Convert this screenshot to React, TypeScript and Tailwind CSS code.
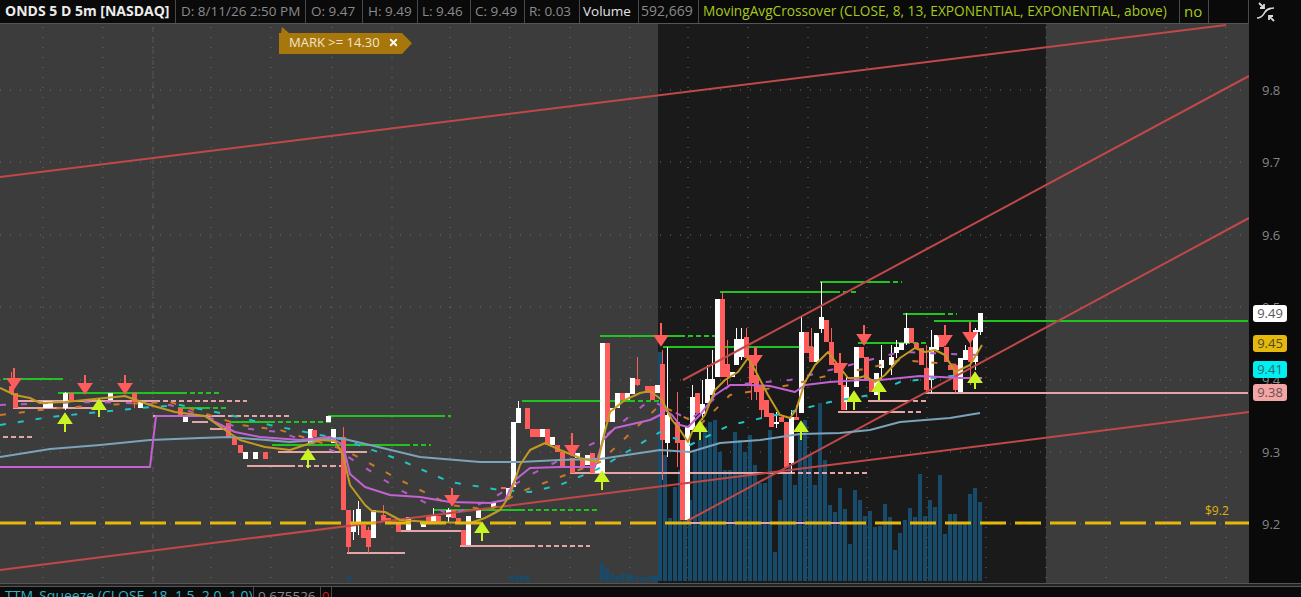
import { X } from "lucide-react";

const FONT = "font-['Open_Sans','Noto_Sans',sans-serif]";

const GRID_X = [43, 103, 153, 211, 271, 332, 392, 450, 510, 570, 630, 688, 748, 808, 867, 927, 986, 1046, 1106, 1166, 1226];
const GRID_Y = [90, 162, 235, 307, 380, 452, 524];

// tops of the volume bars in the session, one every 5px from x=658
const VOLUME = [
  352, 455, 518, 487, 470, 470, 500, 450, 440, 427, 422, 420, 452, 470, 470, 432, 440, 452, 435, 465, 483, 483, 430,
  552, 500, 473, 467, 485, 433, 420, 455, 485, 403, 460, 505, 512, 488, 509, 544, 490, 500, 516, 511, 527, 526, 504,
  517, 550, 533, 520, 508, 517, 474, 516, 500, 507, 475, 534, 514, 514, 523, 523, 494, 488, 502,
];
const PRE_VOLUME = [
  [347, 577], [510, 576], [515, 575], [520, 576], [525, 576], [600, 563], [605, 568], [610, 574], [615, 576], [620, 574],
  [625, 573], [630, 575], [635, 577], [640, 577], [645, 577], [650, 576], [654, 576],
];

type Candle = [number, number, number, "r" | "w", number?, number?];

const CANDLES: Candle[] = [
  [11, 386, 393, "r", 372, 395], [15, 393, 408, "r"], [45, 401, 408, "w"], [50, 401, 408, "w"], [65, 393, 408, "w", 392, 410],
  [71, 393, 402, "r"], [110, 393, 400, "w"], [134, 393, 402, "r", 392, 408], [140, 401, 408, "w"], [180, 408, 415, "r"],
  [185, 417, 422, "w"], [228, 423, 437, "r"], [234, 437, 445, "r"], [240, 445, 453, "r"], [245, 452, 459, "w"],
  [255, 452, 459, "w"], [265, 452, 459, "r"], [310, 429, 443, "w"], [314, 430, 437, "r"], [328, 416, 422, "w"],
  [333, 429, 443, "w"], [343, 437, 510, "r", 427, 510], [348, 510, 547, "r", 510, 553], [353, 523, 532, "w", 510, 540],
  [358, 509, 523, "w", 501, 535], [363, 525, 538, "r"], [368, 530, 547, "r", 527, 553], [373, 510, 538, "w"],
  [383, 515, 522, "r", 505, 522], [388, 518, 523, "r"], [398, 522, 532, "r"], [408, 517, 530, "w"], [423, 523, 527, "w"],
  [428, 516, 522, "r"], [433, 516, 522, "w", 508, 524], [438, 516, 522, "r"], [448, 510, 517, "w", 508, 522], [453, 510, 518, "r"],
  [458, 518, 523, "r"], [463, 530, 545, "r"], [468, 516, 545, "w"], [478, 510, 518, "w"], [493, 503, 508, "w"],
  [503, 487, 489, "r"], [508, 488, 496, "w"], [513, 422, 487, "w"], [518, 408, 423, "w", 401, 423], [527, 408, 429, "r"],
  [532, 429, 437, "r"], [537, 429, 437, "r"], [542, 429, 437, "w"], [547, 429, 445, "r"], [552, 437, 445, "w"],
  [557, 445, 452, "r"], [562, 452, 468, "r"], [572, 458, 473, "r"], [577, 453, 458, "w"], [582, 458, 467, "r"],
  [587, 455, 465, "w"], [592, 453, 473, "r"], [597, 458, 473, "w"], [602, 343, 473, "w"], [607, 343, 422, "r"],
  [612, 408, 422, "w"], [617, 393, 408, "w"], [622, 393, 400, "r"], [627, 393, 400, "w"], [632, 378, 394, "w"],
  [637, 379, 385, "r", 357, 386], [647, 386, 393, "r"], [652, 386, 400, "r"], [657, 385, 393, "w"],
  [662, 364, 440, "r", 350, 480], [667, 415, 443, "w", 347, 457], [677, 422, 443, "r", 392, 467], [682, 440, 520, "r"],
  [687, 427, 520, "w"], [692, 397, 430, "w", 385, 430], [697, 393, 413, "r"], [702, 404, 414, "w", 380, 420],
  [707, 379, 403, "w", 365, 403], [712, 379, 395, "w", 350, 395], [717, 299, 377, "w"], [722, 299, 377, "r", 292, 377],
  [727, 364, 377, "r", 340, 385], [732, 372, 377, "w"], [736, 339, 365, "w", 328, 365], [741, 339, 357, "w", 328, 360],
  [746, 337, 358, "r", 328, 358], [751, 358, 383, "r", 358, 400], [756, 375, 392, "r", 347, 400], [761, 385, 410, "r", 385, 418],
  [766, 400, 417, "r"], [771, 413, 427, "r"], [776, 422, 424, "w", 412, 428], [781, 417, 422, "r"], [786, 422, 467, "r"],
  [791, 417, 463, "w", 410, 473], [796, 417, 420, "r", 405, 420], [801, 332, 413, "w", 316, 413], [806, 332, 353, "r"],
  [811, 347, 362, "r", 328, 362], [816, 333, 362, "w"], [821, 317, 329, "w", 282, 333], [826, 320, 342, "r"],
  [831, 342, 365, "r", 328, 365], [836, 363, 373, "r"], [840, 368, 385, "r"], [843, 385, 410, "r"], [846, 387, 402, "w", 375, 410],
  [856, 347, 387, "w"], [861, 347, 358, "r"], [866, 357, 380, "r"], [871, 380, 392, "r"], [876, 373, 395, "w"],
  [881, 360, 368, "w", 345, 380], [891, 357, 365, "w", 345, 375], [896, 347, 353, "w", 340, 358], [901, 343, 350, "w"],
  [906, 328, 343, "w", 313, 345], [911, 328, 343, "r"], [916, 343, 348, "r"], [921, 348, 365, "r"], [926, 368, 390, "r", 345, 393],
  [931, 347, 380, "w", 330, 393], [936, 335, 350, "w"], [941, 335, 347, "r"], [946, 347, 362, "r"], [950, 365, 370, "r"],
  [955, 365, 390, "r", 365, 393], [960, 358, 392, "w"], [965, 350, 360, "w", 345, 360], [970, 347, 362, "r", 322, 385],
  [975, 330, 362, "w", 328, 370], [980, 313, 332, "w", 313, 335],
];

const DOWN_ARROWS = [
  [14, 368, 388], [85, 375, 393], [125, 375, 393], [452, 488, 505], [572, 433, 455], [661, 323, 345], [755, 347, 365],
  [840, 353, 373], [864, 325, 344], [945, 325, 345], [970, 322, 342],
];
const UP_ARROWS = [
  [65, 414, 432], [99, 400, 417], [308, 450, 468], [482, 523, 541], [602, 472, 490], [700, 422, 440], [801, 422, 440],
  [854, 392, 410], [879, 382, 400], [975, 373, 389],
];

// x start, x where it turns dashed, x end, y
const HIGHS = [
  [3, 63, 63, 379], [58, 182, 222, 393], [178, 205, 227, 408], [230, 270, 331, 422], [272, 330, 330, 445], [328, 440, 451, 416],
  [330, 405, 431, 445], [433, 520, 600, 510], [522, 630, 660, 401], [600, 680, 718, 336], [663, 800, 817, 347],
  [720, 835, 858, 292], [820, 885, 902, 282], [858, 905, 928, 343], [903, 940, 957, 314], [934, 1248, 1248, 321],
];
const LOWS = [
  [13, 93, 93, 408], [18, 155, 247, 401], [153, 220, 290, 416], [3, 3, 33, 437], [192, 208, 208, 422], [210, 230, 230, 429],
  [247, 290, 331, 466], [278, 367, 367, 452], [331, 331, 347, 466], [347, 405, 405, 553], [398, 463, 463, 531], [460, 530, 590, 546],
  [570, 790, 868, 473], [685, 840, 840, 523], [838, 900, 923, 412], [868, 905, 927, 401], [925, 1248, 1248, 393],
];

const TRENDS = [
  [0, 177, 1226, 25],
  [683, 380, 1249, 76],
  [687, 521, 1249, 218],
  [0, 570, 1249, 412],
];

const GOLD = "0,388 15,395 30,398 40,403 65,402 85,400 125,396 150,405 175,412 205,416 225,430 240,440 265,447 290,450 305,445 320,440 335,441 343,455 350,485 365,505 372,511 385,512 400,520 430,522 470,523 485,518 500,510 510,495 520,465 530,450 545,443 560,450 580,458 598,462 604,435 610,412 625,400 640,393 650,391 662,400 672,420 680,430 688,442 692,432 705,415 715,390 725,380 738,372 748,358 755,370 768,395 780,415 790,418 796,410 805,382 815,365 828,352 838,365 848,378 858,378 865,376 875,382 885,375 900,358 915,348 925,352 935,350 945,355 955,372 970,365 982,345";
const PURPLE = "0,467 150,467 156,416 205,416 215,422 235,432 260,437 300,440 330,437 343,445 350,474 365,487 390,495 420,497 450,502 490,503 505,500 515,480 530,468 560,467 595,467 603,440 615,428 650,420 660,415 665,410 672,415 680,425 688,427 700,415 715,395 730,385 750,385 770,386 795,392 805,385 830,382 860,380 880,380 920,376 960,378 982,378";
const SMA = "0,457 50,449 100,445 150,440 200,438 230,437 290,442 340,438 370,445 420,457 480,462 520,462 560,460 600,459 660,450 690,452 720,443 760,440 800,434 840,433 870,430 900,422 950,418 980,413";
const CYAN_DASH = "0,425 50,417 100,412 140,408 180,405 230,415 270,425 345,440 400,460 450,482 500,490 530,492 560,485 600,468 660,432 690,445 730,425 790,412 830,402 870,395 900,382 960,375";
const ORANGE_DASH = "0,415 40,410 100,405 170,402 240,425 280,430 345,450 400,480 450,505 490,510 520,492 600,462 660,405 700,425 730,395 790,385 830,375 870,368 900,360 960,365";
const PURPLE_DASH = "0,405 50,403 100,402 170,405 240,428 280,432 345,455 400,490 450,515 490,500 530,475 600,440 650,400 690,420 730,385 790,380 850,365 900,352 980,355";

function Level({ l, color }: { l: number[]; color: string }) {
  const [a, b, c, y] = l;
  return (
    <g stroke={color} strokeWidth="2">
      <line x1={a} y1={y} x2={b} y2={y} />
      {c > b && <line x1={b} y1={y} x2={c} y2={y} strokeDasharray="5 3" />}
    </g>
  );
}

function PriceChart() {
  return (
    <svg className="block h-full w-[1249px] shrink-0" viewBox="0 24 1249 559">
      <rect x="0" y="24" width="1249" height="559" fill="#3c3c3c" />
      <rect x="658" y="24" width="388" height="559" fill="#1a1a1a" />
      <g stroke="#6e6e6e" strokeWidth="1" strokeDasharray="1 9">
        {GRID_X.map((x) => (
          <line key={x} x1={x} y1="27" x2={x} y2="583" />
        ))}
        {GRID_Y.map((y) => (
          <line key={y} x1="0" y1={y} x2="1249" y2={y} />
        ))}
      </g>
      <line x1="153" y1="27" x2="153" y2="583" stroke="#565656" strokeDasharray="5 6" />

      <g fill="#184a69">
        {PRE_VOLUME.map(([x, y]) => (
          <rect key={x} x={x} y={y} width="4" height={581 - y} />
        ))}
        {VOLUME.map((y, i) => (
          <rect key={i} x={658 + i * 5} y={y} width="4" height={581 - y} />
        ))}
      </g>

      {LOWS.map((l, i) => (
        <Level key={i} l={l} color="#e3a5a5" />
      ))}
      {HIGHS.map((l, i) => (
        <Level key={i} l={l} color="#1fc41f" />
      ))}

      {CANDLES.map(([x, top, bottom, kind, hi, lo], i) => {
        const fill = kind === "w" ? "#ffffff" : "#ff5c5c";
        return (
          <g key={i} fill={fill}>
            <rect x={x} y={hi ?? top} width="1" height={(lo ?? bottom) - (hi ?? top)} />
            <rect x={x - 2} y={top} width="5" height={bottom - top} />
          </g>
        );
      })}

      {TRENDS.map(([x1, y1, x2, y2], i) => (
        <line key={i} x1={x1} y1={y1} x2={x2} y2={y2} stroke="#c04848" strokeWidth="2" />
      ))}

      <g fill="none" strokeLinejoin="round">
        <polyline points={CYAN_DASH} stroke="#1fc4c4" strokeWidth="2" strokeDasharray="6 12" />
        <polyline points={ORANGE_DASH} stroke="#c9772a" strokeWidth="2" strokeDasharray="6 13" />
        <polyline points={PURPLE_DASH} stroke="#b45cc4" strokeWidth="2" strokeDasharray="6 15" />
        <polyline points={SMA} stroke="#7ba3ba" strokeWidth="2" />
        <polyline points={PURPLE} stroke="#c462d4" strokeWidth="2" />
        <polyline points={GOLD} stroke="#c29a22" strokeWidth="2" />
      </g>

      <line x1="0" y1="523" x2="1249" y2="523" stroke="#e6b80c" strokeWidth="3" strokeDasharray="26 9" />

      {DOWN_ARROWS.map(([x, y1, y2]) => (
        <path key={x} d={`M${x} ${y1}V${y2 - 9}M${x - 6} ${y2 - 9}H${x + 6}L${x} ${y2}Z`} stroke="#ff5c5c" strokeWidth="2" fill="#ff5c5c" />
      ))}
      {UP_ARROWS.map(([x, y1, y2]) => (
        <path key={x} d={`M${x} ${y2}V${y1 + 9}M${x - 6} ${y1 + 9}H${x + 6}L${x} ${y1}Z`} stroke="#c9f424" strokeWidth="2" fill="#c9f424" />
      ))}
    </svg>
  );
}

const HEADER_CELLS = [
  { text: "ONDS 5 D 5m [NASDAQ]", w: "w-[176px]", cls: "text-[14px] font-bold text-[#ececec] pl-[5px]" },
  { text: "D: 8/11/26 2:50 PM", w: "w-[130px]", cls: "text-[13.5px] text-[#8b8b8b] pl-[5px]" },
  { text: "O: 9.47", w: "w-[57px]", cls: "text-[13.5px] text-[#8b8b8b] pl-[5px]" },
  { text: "H: 9.49", w: "w-[55px]", cls: "text-[13.5px] text-[#8b8b8b] pl-[5px]" },
  { text: "L: 9.46", w: "w-[53px]", cls: "text-[13.5px] text-[#8b8b8b] pl-[4px]" },
  { text: "C: 9.49", w: "w-[54px]", cls: "text-[13.5px] text-[#8b8b8b] pl-[4px]" },
  { text: "R: 0.03", w: "w-[55px]", cls: "text-[13.5px] text-[#8b8b8b] pl-[4px]" },
  { text: "Volume", w: "w-[59px]", cls: "text-[13.5px] text-[#e4e4e4] pl-[3px]" },
  { text: "592,669", w: "w-[60px]", cls: "text-[14px] text-[#8b8b8b] pl-[2px]" },
  { text: "MovingAvgCrossover (CLOSE, 8, 13, EXPONENTIAL, EXPONENTIAL, above)", w: "w-[481px]", cls: "text-[13.7px] text-[#a6c81e] pl-[4px]" },
  { text: "no", w: "w-[29px]", cls: "text-[15px] text-[#a6c81e] pl-[4px]" },
  { text: "", w: "w-[40px]", cls: "" },
];

const AXIS_LABELS = [
  { text: "9.8", pos: "top-[57px]" },
  { text: "9.7", pos: "top-[129px]" },
  { text: "9.6", pos: "top-[202px]" },
  { text: "9.5", pos: "top-[274px]" },
  { text: "9.4", pos: "top-[347px]" },
  { text: "9.3", pos: "top-[419px]" },
  { text: "9.2", pos: "top-[491px]" },
];

const PRICE_TAGS = [
  { text: "9.49", pos: "top-[281px]", cls: "bg-white text-[#5a5a5a]" },
  { text: "9.45", pos: "top-[311px]", cls: "bg-[#e6b80c] text-[#4d4d20]" },
  { text: "9.41", pos: "top-[337px]", cls: "bg-[#00eef0] text-[#2a6a70]" },
  { text: "9.38", pos: "top-[360px]", cls: "bg-[#f4a6a6] text-[#6a5050]" },
];

export default function App() {
  return (
    <div className={`flex h-[597px] w-[1301px] flex-col overflow-hidden bg-[#0a0a0a] ${FONT}`}>
      <header className="flex h-[24px] shrink-0 leading-[22px]">
        <div className="flex w-[1249px] shrink-0 border-b border-[#555]">
          {HEADER_CELLS.map((c, i) => (
            <div key={i} className={`${c.w} ${c.cls} shrink-0 overflow-hidden whitespace-nowrap border-r border-[#4a4a4a]`}>
              {c.text}
            </div>
          ))}
        </div>
        <div className="flex flex-1 items-start pl-[7px] pt-[2px]">
          <svg width="20" height="20" viewBox="0 0 20 20" fill="none" stroke="#d8d8d8" strokeWidth="1.6">
            <path d="M1 16C6 16 7 13 9 10C11 7 13 6 18 6" />
            <path d="M3 1L8 6M8 2V6H4" strokeWidth="1.8" />
            <path d="M18 19L13 14M13 18V14H17" strokeWidth="1.8" />
          </svg>
        </div>
      </header>

      <main className="relative flex h-[559px] shrink-0">
        <PriceChart />
        <div className="relative flex-1">
          {AXIS_LABELS.map((a) => (
            <span key={a.text} className={`absolute left-[13px] ${a.pos} text-[13px] leading-[18px] text-[#858585]`}>
              {a.text}
            </span>
          ))}
          {PRICE_TAGS.map((t) => (
            <span
              key={t.text}
              className={`absolute left-[4px] ${t.pos} h-[17px] w-[34px] rounded-[3px] text-center text-[13px] leading-[17px] ${t.cls}`}
            >
              {t.text}
            </span>
          ))}
        </div>

        <div className="absolute left-[279px] top-[3px] flex h-[27px] w-[133px] items-end gap-[8px] bg-[#a8770b] pb-[3px] pl-[10px] text-[13px] leading-[18px] text-[#f1e6cc] [clip-path:polygon(0_22%,2px_22%,3px_0,10px_22%,123px_22%,133px_60%,123px_100%,0_100%)]">
          <span>MARK &gt;= 14.30</span>
          <X size={11} strokeWidth={4} className="mb-[3px] text-white" />
        </div>
        <span className="absolute left-[1205px] top-[479px] text-[12px] leading-[16px] text-[#e0b10a]">$9.2</span>
      </main>

      <div className="h-[4px] shrink-0 border-y border-[#555] bg-[#222]" />

      <footer className="flex flex-1 overflow-hidden leading-[18px]">
        <div className="w-[254px] shrink-0 border-r border-[#4a4a4a] pl-[5px] text-[14px] text-[#2fb6c4]">TTM_Squeeze (CLOSE, 18, 1.5, 2.0, 1.0)</div>
        <div className="w-[67px] shrink-0 border-r border-[#4a4a4a] pl-[4px] text-[13.5px] text-[#8b8b8b]">0.675526</div>
        <div className="w-[11px] shrink-0 border-r border-[#4a4a4a] pl-[1px] text-[13px] text-[#d02020]">0</div>
      </footer>
    </div>
  );
}
